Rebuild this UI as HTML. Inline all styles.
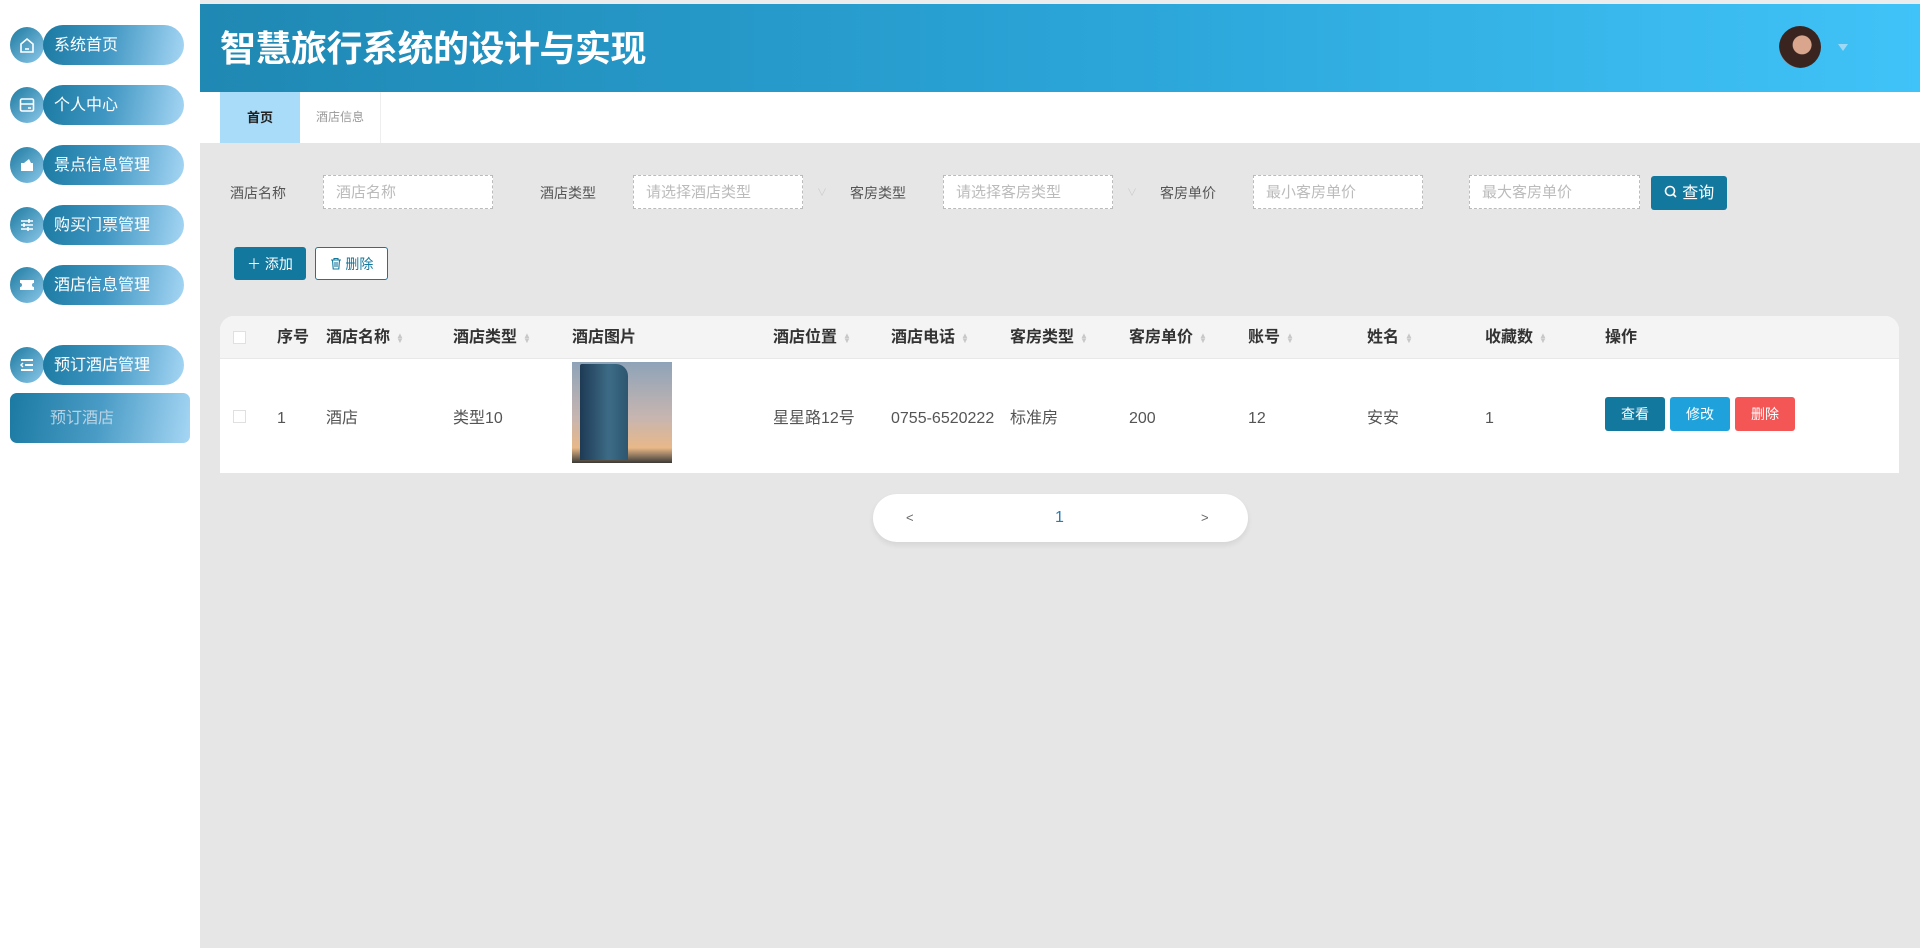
<!DOCTYPE html>
<html><head><meta charset="utf-8">
<style>
*{box-sizing:border-box;margin:0;padding:0}
body{width:1920px;height:948px;overflow:hidden;background:#e6e6e6;font-family:"Liberation Sans","Noto Sans CJK SC",sans-serif;position:relative}
.abs{position:absolute}
#side{left:0;top:0;width:200px;height:948px;background:#fff}
#topline{left:0;top:0;width:1920px;height:4px;background:#ececec}
#hdr{left:200px;top:4px;width:1720px;height:88px;background:linear-gradient(90deg,#1f88b3 0%,#2aa3d6 50%,#40c3f8 100%)}
#hdr h1{position:absolute;left:20px;top:23px;font-size:36px;line-height:44px;color:#fff;font-weight:bold;letter-spacing:-0.5px}
.av{left:1779px;top:26px;width:42px;height:42px;border-radius:50%;background:radial-gradient(circle at 55% 45%,#d9a58c 0 28%,#3a2420 30% 70%,#8a9aa8 72%)}
.caret{left:1838px;top:44px;width:0;height:0;border-left:5px solid transparent;border-right:5px solid transparent;border-top:7px solid #9fd8f5}
#tabs{left:200px;top:92px;width:1720px;height:51px;background:#fff}
.tab{top:0;height:51px;line-height:51px;font-size:13px;text-align:center}
.circ{position:absolute;left:10px;width:34px;height:36px;border-radius:50%;background:linear-gradient(135deg,#1d7aa0,#8cc8ea)}
.pill{position:absolute;left:43px;width:141px;height:40px;border-radius:20px;background:linear-gradient(100deg,#1b7aa2 0%,#3f96c2 45%,#a6d6f4 100%);color:#fff;font-size:16px;line-height:42px;padding-left:11px;white-space:nowrap}
.circ svg{position:absolute;left:8px;top:9px}
.lbl{font-size:14px;color:#555;top:183px}
.inp{top:175px;height:34px;border:1px dashed #bbb;background:#fff;font-size:15px;color:#bbb;line-height:34px;padding-left:12px;white-space:nowrap}
.btn{border-radius:3px;color:#fff;text-align:center;font-size:14px}
#tbl{left:220px;top:316px;width:1679px;height:157px;background:#fff;border-radius:14px 14px 0 0;overflow:hidden}
#th{position:absolute;left:0;top:0;width:100%;height:43px;background:#f4f4f4;border-bottom:1px solid #e8e8e8}
.h{position:absolute;top:12px;line-height:20px;font-size:16px;font-weight:bold;color:#333;white-space:nowrap}
.d{position:absolute;top:93px;line-height:20px;height:20px;font-size:16px;color:#555;white-space:nowrap}
.s{display:inline-block;width:8px;margin-left:6px;color:#c8c8c8;font-size:8px;line-height:5px;vertical-align:middle}
.cb{position:absolute;left:13px;width:13px;height:13px;border:1px solid #e0e0e0;background:#fff}
</style></head><body>
<div id="topline" class="abs"></div>
<div id="side" class="abs">
 <div class="circ" style="top:27px"><svg width="18" height="18" viewBox="0 0 18 18" fill="none" stroke="#fff" stroke-width="1.6"><path d="M3 8L9 3l6 5v8H3z"/><path d="M7 13h4"/></svg></div>
 <div class="pill" style="top:25px">系统首页</div>
 <div class="circ" style="top:87px"><svg width="18" height="18" viewBox="0 0 18 18" fill="none" stroke="#fff" stroke-width="1.6"><rect x="2.5" y="3" width="13" height="12" rx="1.5"/><path d="M2.5 8h13M10 12h3"/></svg></div>
 <div class="pill" style="top:85px">个人中心</div>
 <div class="circ" style="top:147px"><svg width="18" height="18" viewBox="0 0 18 18" fill="#fff"><rect x="3" y="7" width="12" height="8"/><path d="M6 7l5-4 2 4z"/></svg></div>
 <div class="pill" style="top:145px">景点信息管理</div>
 <div class="circ" style="top:207px"><svg width="18" height="18" viewBox="0 0 18 18" stroke="#fff" stroke-width="1.6"><path d="M3 5h12M3 9h12M3 13h12"/><path d="M11 3v4M6 7v4M10 11v4"/></svg></div>
 <div class="pill" style="top:205px">购买门票管理</div>
 <div class="circ" style="top:267px"><svg width="18" height="18" viewBox="0 0 18 18" fill="#fff"><path d="M2 4h14v3a2 2 0 0 0 0 4v3H2v-3a2 2 0 0 0 0-4z"/></svg></div>
 <div class="pill" style="top:265px">酒店信息管理</div>
 <div class="circ" style="top:347px"><svg width="18" height="18" viewBox="0 0 18 18" stroke="#fff" stroke-width="2"><path d="M3 4h12M7 9h8M3 14h12"/><path d="M5 7l-2 2 2 2" stroke-width="1.4" fill="none"/></svg></div>
 <div class="pill" style="top:345px">预订酒店管理</div>
 <div class="abs" style="left:10px;top:393px;width:180px;height:50px;border-radius:7px;background:linear-gradient(100deg,#1b7aa2 0%,#4a9cc6 50%,#a6d6f4 100%);color:#b9d3e4;font-size:16px;line-height:52px;padding-left:40px">预订酒店</div>
</div>
<div id="hdr" class="abs"><h1>智慧旅行系统的设计与实现</h1></div>
<div class="abs av"></div><div class="abs caret"></div>
<div id="tabs" class="abs">
 <div class="abs tab" style="left:20px;width:80px;background:#a8dcf8;color:#222;font-weight:bold">首页</div>
 <div class="abs tab" style="left:100px;width:81px;color:#999;border-right:1px solid #eee;font-size:12px">酒店信息</div>
</div>
<div class="abs lbl" style="left:230px">酒店名称</div>
<div class="abs inp" style="left:323px;width:170px">酒店名称</div>
<div class="abs lbl" style="left:540px">酒店类型</div>
<div class="abs inp" style="left:633px;width:170px">请选择酒店类型</div>
<div class="abs" style="left:817px;top:184px;color:#ccc;font-size:10px">∨</div>
<div class="abs lbl" style="left:850px">客房类型</div>
<div class="abs inp" style="left:943px;width:170px">请选择客房类型</div>
<div class="abs" style="left:1127px;top:184px;color:#ccc;font-size:10px">∨</div>
<div class="abs lbl" style="left:1160px">客房单价</div>
<div class="abs inp" style="left:1253px;width:170px">最小客房单价</div>
<div class="abs inp" style="left:1469px;width:171px">最大客房单价</div>
<div class="abs btn" style="left:1651px;top:176px;width:76px;height:34px;line-height:36px;background:#13789e;font-size:16px"><svg width="14" height="14" viewBox="0 0 14 14" style="vertical-align:-1px" fill="none" stroke="#fff" stroke-width="1.6"><circle cx="6" cy="6" r="4.5"/><path d="M9.5 9.5L12 12"/></svg> 查询</div>
<div class="abs btn" style="left:234px;top:247px;width:72px;height:33px;line-height:35px;background:#13789e">＋ 添加</div>
<div class="abs btn" style="left:315px;top:247px;width:73px;height:33px;line-height:33px;background:#fff;border:1px solid #13789e;color:#13789e"><svg width="12" height="13" viewBox="0 0 12 13" style="vertical-align:-1px" fill="none" stroke="#13789e" stroke-width="1.1"><path d="M1 3h10M4 3V1.5h4V3M2.5 3l.7 9h5.6l.7-9M5 5v5M7 5v5"/></svg> 删除</div>
<div id="tbl" class="abs">
 <div id="th"></div>
 <div class="cb" style="top:15px"></div>
 <div class="h" style="left:57px">序号</div>
 <div class="h" style="left:106px">酒店名称<span class="s">▲<br>▼</span></div>
 <div class="h" style="left:233px">酒店类型<span class="s">▲<br>▼</span></div>
 <div class="h" style="left:352px">酒店图片</div>
 <div class="h" style="left:553px">酒店位置<span class="s">▲<br>▼</span></div>
 <div class="h" style="left:671px">酒店电话<span class="s">▲<br>▼</span></div>
 <div class="h" style="left:790px">客房类型<span class="s">▲<br>▼</span></div>
 <div class="h" style="left:909px">客房单价<span class="s">▲<br>▼</span></div>
 <div class="h" style="left:1028px">账号<span class="s">▲<br>▼</span></div>
 <div class="h" style="left:1147px">姓名<span class="s">▲<br>▼</span></div>
 <div class="h" style="left:1265px">收藏数<span class="s">▲<br>▼</span></div>
 <div class="h" style="left:1385px">操作</div>
 <div class="cb" style="top:94px"></div>
 <div class="d" style="left:57px">1</div>
 <div class="d" style="left:106px">酒店</div>
 <div class="d" style="left:233px">类型10</div>
 <div style="position:absolute;left:352px;top:46px;width:100px;height:101px;background:linear-gradient(180deg,#8ea3b8 0%,#c7b5b0 55%,#e8b888 85%,#3b3a38 100%)"><div style="position:absolute;left:8px;top:2px;width:48px;height:96px;background:linear-gradient(90deg,#1e3a55,#3d6b86 60%,#2d5670);border-radius:2px 12px 0 0"></div></div>
 <div class="d" style="left:553px">星星路12号</div>
 <div class="d" style="left:671px">0755-6520222</div>
 <div class="d" style="left:790px">标准房</div>
 <div class="d" style="left:909px">200</div>
 <div class="d" style="left:1028px">12</div>
 <div class="d" style="left:1147px">安安</div>
 <div class="d" style="left:1265px">1</div>
 <div class="btn abs" style="left:1385px;top:81px;width:60px;height:34px;line-height:34px;background:#13789e">查看</div>
 <div class="btn abs" style="left:1450px;top:81px;width:60px;height:34px;line-height:34px;background:#1fa2dc">修改</div>
 <div class="btn abs" style="left:1515px;top:81px;width:60px;height:34px;line-height:34px;background:#f45656">删除</div>
</div>
<div class="abs" style="left:873px;top:494px;width:375px;height:48px;border-radius:24px;background:#fff;box-shadow:0 3px 6px rgba(0,0,0,.08)">
 <div class="abs" style="left:33px;top:16px;font-size:13px;color:#666">&lt;</div>
 <div class="abs" style="left:182px;top:15px;font-size:16px;color:#2b7bb0">1</div>
 <div class="abs" style="left:328px;top:16px;font-size:13px;color:#666">&gt;</div>
</div>
</body></html>
